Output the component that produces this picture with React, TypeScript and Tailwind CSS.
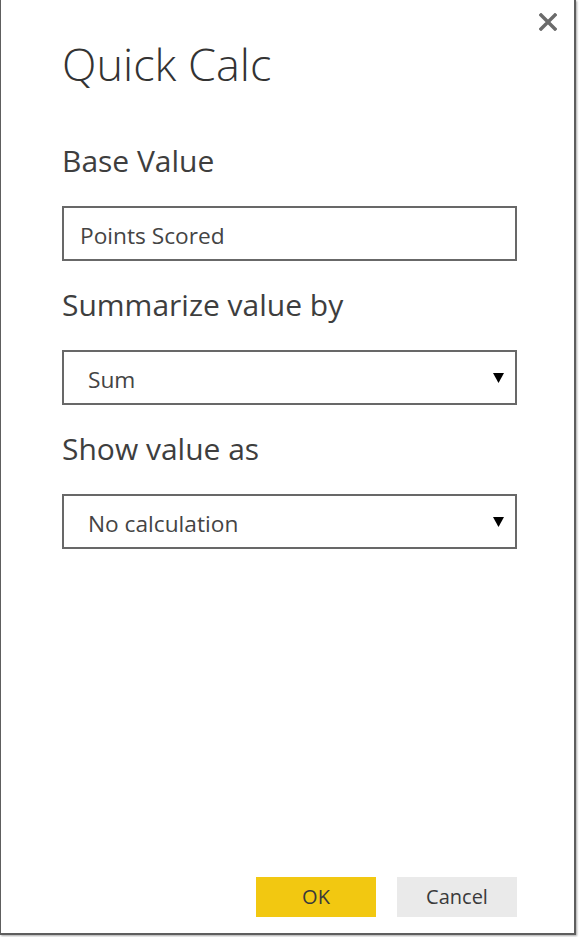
import React from "react";

function Caret() {
  return (
    <svg width="11" height="10" viewBox="0 0 11 10" className="shrink-0">
      <polygon points="0,0 11,0 5.5,10" fill="#000" />
    </svg>
  );
}

function Field({ children, dropdown, padLeft }: { children: React.ReactNode; dropdown?: boolean; padLeft: string }) {
  return (
    <div
      className={`flex h-[55px] w-[455px] items-center justify-between border-2 border-[#686868] bg-white pr-[11px] ${padLeft}`}
    >
      <span className="pt-[3px] text-[22.7px] leading-[23px] text-[#444444]">{children}</span>
      {dropdown ? <Caret /> : null}
    </div>
  );
}

function Label({ children, className }: { children: React.ReactNode; className: string }) {
  return <div className={`h-[30px] text-[30px] leading-[30px] text-[#3e3e3e] ${className}`}>{children}</div>;
}

export default function App() {
  return (
    <div className="h-[937px] w-[579px] bg-white" style={{ fontFamily: '"Open Sans", "Noto Sans", sans-serif' }}>
      <div className="flex h-[935px] w-[576px] flex-col border-b-2 border-l border-r-2 border-[#5e5e5e] bg-white shadow-[1px_1px_2px_rgba(0,0,0,0.35)]">
        <div className="flex items-start justify-between pl-[61px] pr-[17px] pt-[13px]">
          <div className="mt-[28px] h-[46px] text-[45px] font-light leading-[46px] text-[#333333]">Quick Calc</div>
          <svg width="18" height="18" viewBox="0 0 18 18">
            <path d="M2 2 L16 16 M16 2 L2 16" stroke="#6b6b6b" strokeWidth="3.4" strokeLinecap="square" />
          </svg>
        </div>
        <div className="flex flex-col pl-[61px]">
          <Label className="mt-[59px]">Base Value</Label>
          <div className="mt-[30px]">
            <Field padLeft="pl-[16px]">Points Scored</Field>
          </div>
          <Label className="mt-[29px]">Summarize value by</Label>
          <div className="mt-[30px]">
            <Field dropdown padLeft="pl-[24px]">Sum</Field>
          </div>
          <Label className="mt-[29px]">Show value as</Label>
          <div className="mt-[30px]">
            <Field dropdown padLeft="pl-[24px]">No calculation</Field>
          </div>
        </div>
        <div className="mt-auto flex justify-end gap-[21px] pb-[16px] pr-[57px]">
          <button className="flex h-[40px] w-[120px] items-center justify-center bg-[#f2c811] text-[20px] text-[#3a3a3a]">
            OK
          </button>
          <button className="flex h-[40px] w-[120px] items-center justify-center bg-[#eaeaea] text-[20px] text-[#3a3a3a]">
            Cancel
          </button>
        </div>
      </div>
    </div>
  );
}
